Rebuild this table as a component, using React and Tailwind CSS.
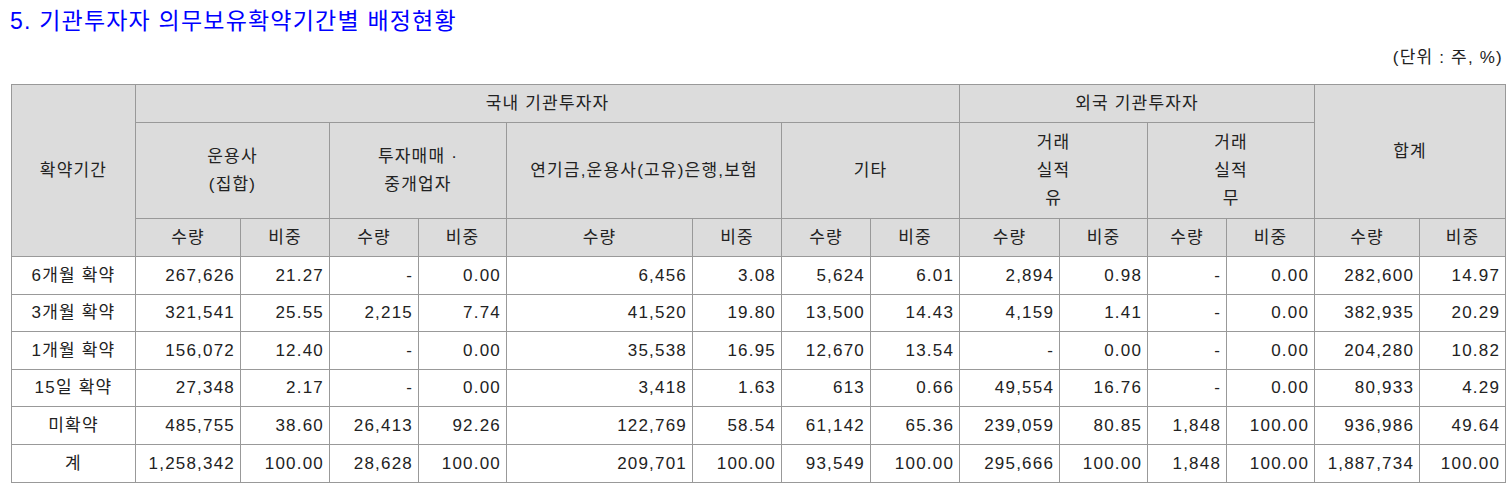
import React from "react";

const font = { fontFamily: "'Liberation Sans', 'Noto Sans CJK KR', sans-serif" };

const rows = [
  ["6개월 확약", "267,626", "21.27", "-", "0.00", "6,456", "3.08", "5,624", "6.01", "2,894", "0.98", "-", "0.00", "282,600", "14.97"],
  ["3개월 확약", "321,541", "25.55", "2,215", "7.74", "41,520", "19.80", "13,500", "14.43", "4,159", "1.41", "-", "0.00", "382,935", "20.29"],
  ["1개월 확약", "156,072", "12.40", "-", "0.00", "35,538", "16.95", "12,670", "13.54", "-", "0.00", "-", "0.00", "204,280", "10.82"],
  ["15일 확약", "27,348", "2.17", "-", "0.00", "3,418", "1.63", "613", "0.66", "49,554", "16.76", "-", "0.00", "80,933", "4.29"],
  ["미확약", "485,755", "38.60", "26,413", "92.26", "122,769", "58.54", "61,142", "65.36", "239,059", "80.85", "1,848", "100.00", "936,986", "49.64"],
  ["계", "1,258,342", "100.00", "28,628", "100.00", "209,701", "100.00", "93,549", "100.00", "295,666", "100.00", "1,848", "100.00", "1,887,734", "100.00"],
];

const widths = [124, 105, 89, 89, 88, 186, 89, 89, 89, 100, 88, 79, 88, 105, 86];

const th = "border border-[#999] bg-[#dcdcdc] font-normal text-center align-middle p-0";

export default function App() {
  return (
    <div className="bg-white text-[#222] tracking-[1.2px]" style={font}>
      <div className="pl-[10px] pt-[6px] h-[36px] text-[23px] leading-[30px] text-[#0000ff]">
        5. 기관투자자 의무보유확약기간별 배정현황
      </div>
      <div className="flex justify-end pr-[6px] pb-[4px] h-[48px] items-center text-[17px]">(단위 : 주, %)</div>
      <div className="pl-[11px] pr-[4px]">
        <table className="table-fixed border-collapse border border-black w-[1494px] text-[17px]">
          <colgroup>
            {widths.map((w, i) => (
              <col key={i} style={{ width: w }} />
            ))}
          </colgroup>
          <thead>
            <tr className="h-[38px]">
              <th rowSpan={3} className={th}>확약기간</th>
              <th colSpan={8} className={th}>국내 기관투자자</th>
              <th colSpan={4} className={th}>외국 기관투자자</th>
              <th colSpan={2} rowSpan={2} className={th}>합계</th>
            </tr>
            <tr className="h-[96px] leading-[28px]">
              <th colSpan={2} className={th}>운용사<br />(집합)</th>
              <th colSpan={2} className={th}>투자매매 ·<br />중개업자</th>
              <th colSpan={2} className={th}>연기금,운용사(고유)은행,보험</th>
              <th colSpan={2} className={th}>기타</th>
              <th colSpan={2} className={th}>거래<br />실적<br />유</th>
              <th colSpan={2} className={th}>거래<br />실적<br />무</th>
            </tr>
            <tr className="h-[38px]">
              {Array.from({ length: 7 }).map((_, i) => (
                <React.Fragment key={i}>
                  <th className={th}>수량</th>
                  <th className={th}>비중</th>
                </React.Fragment>
              ))}
            </tr>
          </thead>
          <tbody>
            {rows.map((r, i) => (
              <tr key={i} className="h-[37.6px]">
                {r.map((c, j) => (
                  <td
                    key={j}
                    className={
                      j === 0
                        ? "border border-[#999] text-center p-0"
                        : "border border-[#999] text-right pr-[5px] pl-0 py-0"
                    }
                  >
                    {c}
                  </td>
                ))}
              </tr>
            ))}
          </tbody>
        </table>
      </div>
    </div>
  );
}
